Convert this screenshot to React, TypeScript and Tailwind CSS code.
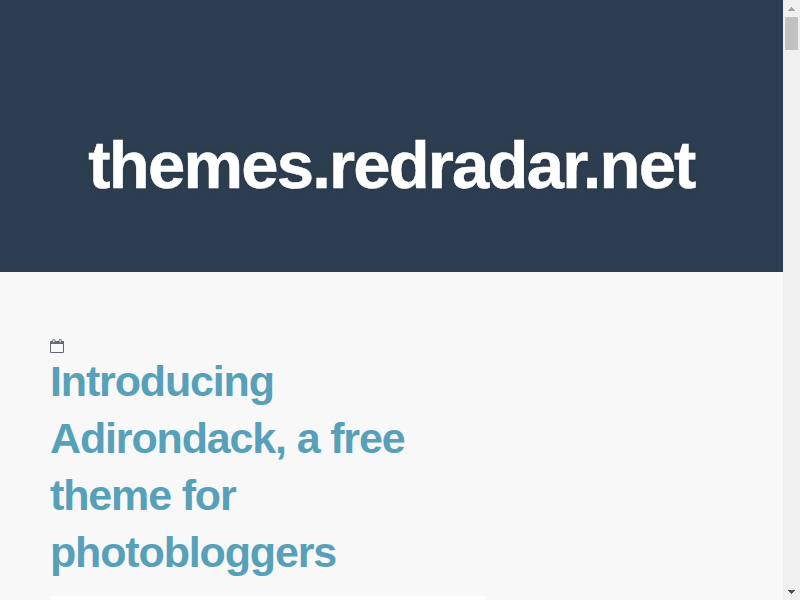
const posts = [
  {
    title: 'Introducing Adirondack, a free theme for photobloggers',
  },
]

function CalendarIcon() {
  return (
    <svg width="14" height="14" viewBox="0 0 14 14" fill="none" className="block text-[#626774]" aria-hidden="true">
      <path d="M0.5 2.5h13v11h-13z" stroke="currentColor" />
      <path d="M0.5 2h13v3h-13z" fill="currentColor" />
      <rect x="2.5" y="0.5" width="2.5" height="3.2" rx="1" fill="#c9cbd0" stroke="currentColor" strokeWidth="0.8" />
      <rect x="9" y="0.5" width="2.5" height="3.2" rx="1" fill="#c9cbd0" stroke="currentColor" strokeWidth="0.8" />
    </svg>
  )
}

function Scrollbar() {
  return (
    <div className="flex h-full w-[17px] shrink-0 flex-col items-center bg-[#f0f0f0]">
      <div className="flex h-[17px] items-center">
        <svg width="7" height="4" viewBox="0 0 7 4" shapeRendering="crispEdges" className="fill-[#a3a3a3]">
          <path d="M3 0h1v1h1v1h1v1h1v1H0V3h1V2h1V1h1z" />
        </svg>
      </div>
      <div className="h-[33px] w-[13px] bg-[#c1c1c1]" />
      <div className="mt-auto flex h-[17px] items-center">
        <svg width="7" height="4" viewBox="0 0 7 4" shapeRendering="crispEdges" className="fill-[#505050]">
          <path d="M0 0h7v1H6v1H5v1H4v1H3V3H2V2H1V1H0z" />
        </svg>
      </div>
    </div>
  )
}

export default function App() {
  return (
    <div className="flex h-screen overflow-hidden bg-[#f8f8f8] font-['Liberation_Sans',Arial,sans-serif]">
      <div className="min-w-0 flex-1 overflow-hidden">
        <header className="flex h-[272px] items-center justify-center bg-[#2d3e50] pt-[58px]">
          <h1 className="text-[67px] leading-[74px] font-bold tracking-[-1.8px] whitespace-nowrap text-white [-webkit-text-stroke:0.5px_white] [text-shadow:0_1px_6px_rgba(0,0,0,0.1)]">
            themes.redradar.net
          </h1>
        </header>

        <main className="px-[50px] pt-[67px]">
          {posts.map((post) => (
            <article key={post.title} className="w-[436px]">
              <CalendarIcon />
              <h2 className="text-[43px] leading-[57px] font-bold tracking-[-1.15px] text-[#57a0b9]">
                {post.title}
              </h2>
              {/* Post preview */}
              <div className="mt-[15px] h-[290px] bg-white" />
            </article>
          ))}
        </main>
      </div>
      <Scrollbar />
    </div>
  )
}
